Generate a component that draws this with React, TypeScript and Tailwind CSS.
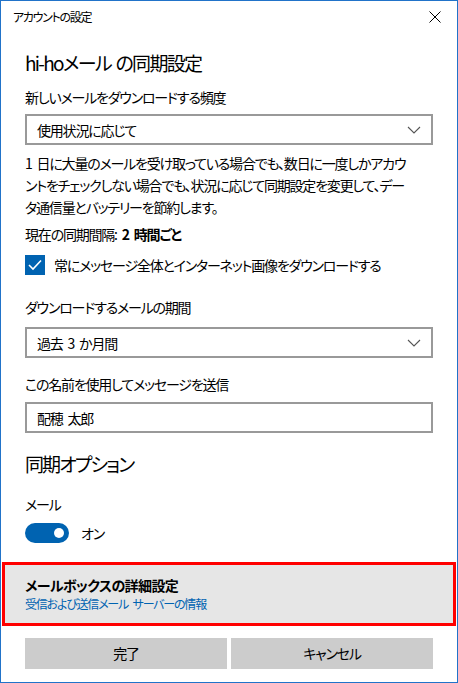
import React from "react";

const font = "font-['Noto_Sans_CJK_JP','Noto_Sans',sans-serif] [font-feature-settings:'palt']";

function Chevron() {
  return (
    <svg width="14" height="8" viewBox="0 0 14 8" className="shrink-0">
      <path d="M1 1 L7 7 L13 1" fill="none" stroke="#555" strokeWidth="1.1" />
    </svg>
  );
}

function Select({ value }: { value: string }) {
  return (
    <div className="h-[31px] border-2 border-[#999999] bg-white flex items-center justify-between pl-[10px] pr-[10px]">
      <span className="text-[14px] leading-[20px] text-black">{value}</span>
      <Chevron />
    </div>
  );
}

export default function App() {
  return (
    <div className={`${font} tracking-[-1.2px] [word-spacing:3px] w-[458px] h-[683px] overflow-hidden bg-white border border-[#2173c9] flex flex-col text-black`}>
      {/* title bar */}
      <div className="h-[31px] flex items-center justify-between pl-[12px] pr-[16px] shrink-0">
        <span className="text-[12px] leading-[16px] tracking-[-1.3px]">アカウントの設定</span>
        <svg width="12" height="12" viewBox="0 0 12 12">
          <path d="M0.5 0.5 L11.5 11.5 M11.5 0.5 L0.5 11.5" stroke="#000" strokeWidth="1" />
        </svg>
      </div>

      <div className="px-[24px] flex flex-col shrink-0">
        <div className="mt-[17px] text-[19px] leading-[28px] tracking-[-1.7px] [word-spacing:2px]">hi-hoメール の同期設定</div>
        <div className="mt-[10px] text-[14px] leading-[20px]">新しいメールをダウンロードする頻度</div>
        <div className="mt-[7px]">
          <Select value="使用状況に応じて" />
        </div>
        <p className="mt-[7px] text-[14px] leading-[22px] whitespace-nowrap">
          1 日に大量のメールを受け取っている場合でも、数日に一度しかアカウ
          <br />
          ントをチェックしない場合でも、状況に応じて同期設定を変更して、デー
          <br />
          タ通信量とバッテリーを節約します。
        </p>
        <div className="mt-[6px] text-[14px] leading-[20px]">
          現在の同期間隔: <span className="font-bold">2 時間ごと</span>
        </div>
        <div className="mt-[11px] flex items-center gap-[9px]">
          <div className="w-[20px] h-[20px] bg-[#0063b1] flex items-center justify-center shrink-0">
            <svg width="14" height="12" viewBox="0 0 14 12">
              <path d="M1 6 L5 10 L13 1.5" fill="none" stroke="#fff" strokeWidth="1.6" />
            </svg>
          </div>
          <span className="text-[14px] leading-[20px]">常にメッセージ全体とインターネット画像をダウンロードする</span>
        </div>
        <div className="mt-[22px] text-[14px] leading-[20px]">ダウンロードするメールの期間</div>
        <div className="mt-[10px]">
          <Select value="過去 3 か月間" />
        </div>
        <div className="mt-[16px] text-[14px] leading-[20px]">この名前を使用してメッセージを送信</div>
        <div className="mt-[8px] h-[31px] border-2 border-[#999999] flex items-center pl-[10px]">
          <span className="text-[14px] leading-[20px]">配穂 太郎</span>
        </div>
        <div className="mt-[17px] text-[19px] leading-[28px] tracking-[-1.9px]">同期オプション</div>
        <div className="mt-[16px] text-[14px] leading-[20px]">メール</div>
        <div className="mt-[9px] flex items-center gap-[12px]">
          <div className="w-[44px] h-[20px] rounded-full bg-[#0063b1] flex items-center justify-end pr-[5px]">
            <div className="w-[10px] h-[10px] rounded-full bg-white" />
          </div>
          <span className="text-[14px] leading-[20px]">オン</span>
        </div>
      </div>

      <div className="mt-[19px] mx-[1px] h-[64px] shrink-0 border-[3px] border-[#ff0000] bg-[#e6e6e6] flex flex-col justify-center pl-[20px]">
        <div className="text-[14px] leading-[19px] font-bold tracking-[-0.6px]">メールボックスの詳細設定</div>
        <div className="text-[12px] leading-[17px] text-[#0063b1]">受信および送信メール サーバーの情報</div>
      </div>

      <div className="mt-[12px] px-[24px] grid grid-cols-2 gap-[4px] shrink-0">
        <div className="h-[31px] bg-[#cccccc] flex items-center justify-center text-[14px]">完了</div>
        <div className="h-[31px] bg-[#cccccc] flex items-center justify-center text-[14px]">キャンセル</div>
      </div>
    </div>
  );
}
